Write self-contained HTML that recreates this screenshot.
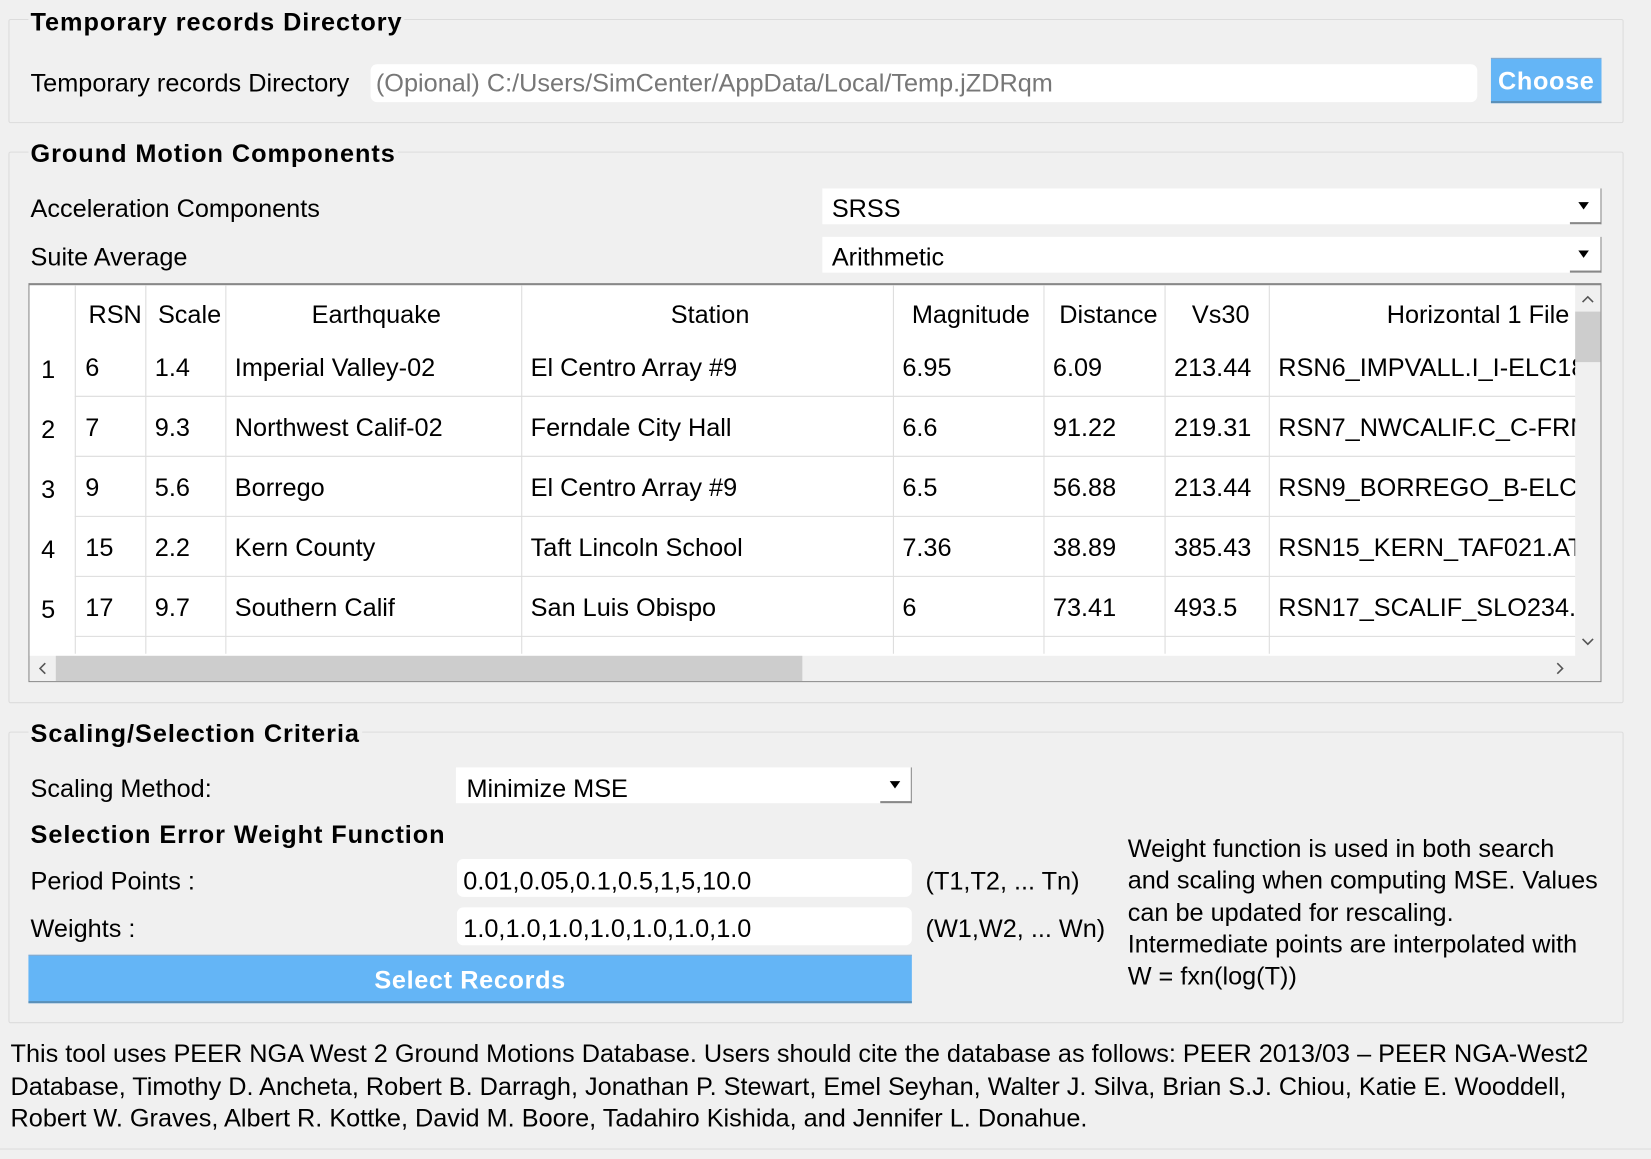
<!DOCTYPE html>
<html><head><meta charset="utf-8"><style>
html,body{margin:0;padding:0;background:#f0f0f0;overflow:hidden;width:1651px;height:1159px}
#w{position:absolute;left:0;top:0;width:1568px;height:1101px;transform:scale(1.05293,1.05268);transform-origin:0 0;font-family:"Liberation Sans",sans-serif;font-size:24px;letter-spacing:0;color:#000}
.a{position:absolute;white-space:nowrap}
.grp{position:absolute;border:1px solid #dcdcdc;border-radius:2px}
.t{position:absolute;font-weight:bold;background:#f0f0f0;padding:0 2px;line-height:26px;letter-spacing:0.9px}
.in{position:absolute;background:#fff;border-radius:6px}
.cb{position:absolute;background:#fff}
.cb:after{content:"";position:absolute;right:0;bottom:0;width:30px;height:34px;border-right:1px solid #888;border-bottom:2px solid #888;box-sizing:border-box}
.arr{position:absolute;width:0;height:0;border-left:5px solid transparent;border-right:5px solid transparent;border-top:7px solid #000}
.btn{position:absolute;background:#64b5f6;color:#fff;font-weight:bold;text-align:center;border-bottom:2px solid #5a8fb8;border-top:1px solid #8ac;box-sizing:border-box;letter-spacing:0.6px}
.c{position:absolute;line-height:24px;white-space:nowrap}
</style></head><body><div id="w">

<div class="grp" style="left:8px;top:18px;width:1532px;height:97px"></div>
<div class="t" style="left:27px;top:9px">Temporary records Directory</div>
<div class="a" style="left:29px;top:66px">Temporary records Directory</div>
<div class="in" style="left:352px;top:61px;width:1051px;height:36px"></div>
<div class="a" style="left:357px;top:66px;color:#777">(Opional) C:/Users/SimCenter/AppData/Local/Temp.jZDRqm</div>
<div class="btn" style="left:1416px;top:55px;width:105px;height:43px;line-height:43px">Choose</div>

<div class="grp" style="left:8px;top:144px;width:1532px;height:522px"></div>
<div class="t" style="left:27px;top:134px">Ground Motion Components</div>
<div class="a" style="left:29px;top:185px">Acceleration Components</div>
<div class="cb" style="left:781px;top:179px;width:740px;height:34px"></div>
<div class="a" style="left:790px;top:185px">SRSS</div>
<div class="arr" style="left:1499px;top:192px"></div>
<div class="a" style="left:29px;top:231px">Suite Average</div>
<div class="cb" style="left:781px;top:225px;width:740px;height:34px"></div>
<div class="a" style="left:790px;top:231px">Arithmetic</div>
<div class="arr" style="left:1499px;top:238px"></div>

<div style="position:absolute;left:27px;top:269px;width:1494px;height:379px;border:1px solid #888;border-top:2px solid #888;box-sizing:border-box;background:#f0f0f0;overflow:hidden">
 <div style="position:absolute;left:0;top:0;width:1468px;height:352px;background:#fff"></div>
 <svg width="1494" height="379" style="position:absolute;left:-1px;top:-2px">
  <g stroke="#dcdcdc" stroke-width="1">
   <line x1="44.5" y1="0" x2="44.5" y2="352"/>
   <line x1="111.5" y1="0" x2="111.5" y2="352"/>
   <line x1="187.5" y1="0" x2="187.5" y2="352"/>
   <line x1="468.5" y1="0" x2="468.5" y2="352"/>
   <line x1="821.5" y1="0" x2="821.5" y2="352"/>
   <line x1="964.5" y1="0" x2="964.5" y2="352"/>
   <line x1="1079.5" y1="0" x2="1079.5" y2="352"/>
   <line x1="1178.5" y1="0" x2="1178.5" y2="352"/>
   <line x1="44" y1="107.5" x2="1469" y2="107.5"/>
   <line x1="44" y1="164.5" x2="1469" y2="164.5"/>
   <line x1="44" y1="221.5" x2="1469" y2="221.5"/>
   <line x1="44" y1="278.5" x2="1469" y2="278.5"/>
   <line x1="44" y1="335.5" x2="1469" y2="335.5"/>
  </g>
  <rect x="1469" y="27" width="24" height="48" fill="#cdcdcd"/>
  <rect x="26" y="354" width="709" height="24" fill="#cdcdcd"/>
  <polyline points="1476,18 1481,13 1486,18" fill="none" stroke="#555" stroke-width="1.5"/>
  <polyline points="1476,338 1481,343 1486,338" fill="none" stroke="#555" stroke-width="1.5"/>
  <polyline points="16,361 11,366 16,371" fill="none" stroke="#555" stroke-width="1.5"/>
  <polyline points="1452,361 1457,366 1452,371" fill="none" stroke="#555" stroke-width="1.5"/>
 </svg>
 <div style="position:absolute;left:0;top:0;width:1468px;height:352px;overflow:hidden">
  <div class="c" style="left:56px;top:17px">RSN</div>
  <div class="c" style="left:122px;top:17px">Scale</div>
  <div class="c" style="left:268px;top:17px">Earthquake</div>
  <div class="c" style="left:609px;top:17px">Station</div>
  <div class="c" style="left:838px;top:17px">Magnitude</div>
  <div class="c" style="left:978px;top:17px">Distance</div>
  <div class="c" style="left:1104px;top:17px">Vs30</div>
  <div class="c" style="left:1289px;top:17px">Horizontal 1 File</div>

  <div class="c" style="left:11px;top:69px">1</div><div class="c" style="left:53px;top:67px">6</div><div class="c" style="left:119px;top:67px">1.4</div><div class="c" style="left:195px;top:67px">Imperial Valley-02</div><div class="c" style="left:476px;top:67px">El Centro Array #9</div><div class="c" style="left:829px;top:67px">6.95</div><div class="c" style="left:972px;top:67px">6.09</div><div class="c" style="left:1087px;top:67px">213.44</div><div class="c" style="left:1186px;top:67px">RSN6_IMPVALL.I_I-ELC180</div>
  <div class="c" style="left:11px;top:126px">2</div><div class="c" style="left:53px;top:124px">7</div><div class="c" style="left:119px;top:124px">9.3</div><div class="c" style="left:195px;top:124px">Northwest Calif-02</div><div class="c" style="left:476px;top:124px">Ferndale City Hall</div><div class="c" style="left:829px;top:124px">6.6</div><div class="c" style="left:972px;top:124px">91.22</div><div class="c" style="left:1087px;top:124px">219.31</div><div class="c" style="left:1186px;top:124px">RSN7_NWCALIF.C_C-FRN0</div>
  <div class="c" style="left:11px;top:183px">3</div><div class="c" style="left:53px;top:181px">9</div><div class="c" style="left:119px;top:181px">5.6</div><div class="c" style="left:195px;top:181px">Borrego</div><div class="c" style="left:476px;top:181px">El Centro Array #9</div><div class="c" style="left:829px;top:181px">6.5</div><div class="c" style="left:972px;top:181px">56.88</div><div class="c" style="left:1087px;top:181px">213.44</div><div class="c" style="left:1186px;top:181px">RSN9_BORREGO_B-ELC000</div>
  <div class="c" style="left:11px;top:240px">4</div><div class="c" style="left:53px;top:238px">15</div><div class="c" style="left:119px;top:238px">2.2</div><div class="c" style="left:195px;top:238px">Kern County</div><div class="c" style="left:476px;top:238px">Taft Lincoln School</div><div class="c" style="left:829px;top:238px">7.36</div><div class="c" style="left:972px;top:238px">38.89</div><div class="c" style="left:1087px;top:238px">385.43</div><div class="c" style="left:1186px;top:238px">RSN15_KERN_TAF021.AT2</div>
  <div class="c" style="left:11px;top:297px">5</div><div class="c" style="left:53px;top:295px">17</div><div class="c" style="left:119px;top:295px">9.7</div><div class="c" style="left:195px;top:295px">Southern Calif</div><div class="c" style="left:476px;top:295px">San Luis Obispo</div><div class="c" style="left:829px;top:295px">6</div><div class="c" style="left:972px;top:295px">73.41</div><div class="c" style="left:1087px;top:295px">493.5</div><div class="c" style="left:1186px;top:295px">RSN17_SCALIF_SLO234.AT2</div>
 </div>
</div>

<div class="grp" style="left:8px;top:695px;width:1532px;height:275px"></div>
<div class="t" style="left:27px;top:685px">Scaling/Selection Criteria</div>
<div class="a" style="left:29px;top:736px">Scaling Method:</div>
<div class="cb" style="left:433px;top:729px;width:433px;height:34px"></div>
<div class="a" style="left:443px;top:736px">Minimize MSE</div>
<div class="arr" style="left:845px;top:742px"></div>
<div class="a" style="left:29px;top:780px;font-weight:bold;letter-spacing:0.9px">Selection Error Weight Function</div>
<div class="a" style="left:29px;top:824px">Period Points :</div>
<div class="in" style="left:434px;top:816px;width:432px;height:36px"></div>
<div class="a" style="left:440px;top:824px">0.01,0.05,0.1,0.5,1,5,10.0</div>
<div class="a" style="left:879px;top:824px">(T1,T2, ... Tn)</div>
<div class="a" style="left:29px;top:869px">Weights :</div>
<div class="in" style="left:434px;top:862px;width:432px;height:36px"></div>
<div class="a" style="left:440px;top:869px">1.0,1.0,1.0,1.0,1.0,1.0,1.0</div>
<div class="a" style="left:879px;top:869px">(W1,W2, ... Wn)</div>
<div class="btn" style="left:27px;top:907px;width:839px;height:46px;line-height:48px">Select Records</div>
<div class="a" style="left:1071px;top:792px;line-height:30.3px">Weight function is used in both search<br>and scaling when computing MSE. Values<br>can be updated for rescaling.<br>Intermediate points are interpolated with<br>W = fxn(log(T))</div>

<div class="a" style="left:10px;top:987px;line-height:30.5px">This tool uses PEER NGA West 2 Ground Motions Database. Users should cite the database as follows: PEER 2013/03 – PEER NGA-West2<br>Database, Timothy D. Ancheta, Robert B. Darragh, Jonathan P. Stewart, Emel Seyhan, Walter J. Silva, Brian S.J. Chiou, Katie E. Wooddell,<br>Robert W. Graves, Albert R. Kottke, David M. Boore, Tadahiro Kishida, and Jennifer L. Donahue.</div>
<div style="position:absolute;left:0;top:1091px;width:1568px;height:1px;background:#dcdcdc"></div>
</div></body></html>
